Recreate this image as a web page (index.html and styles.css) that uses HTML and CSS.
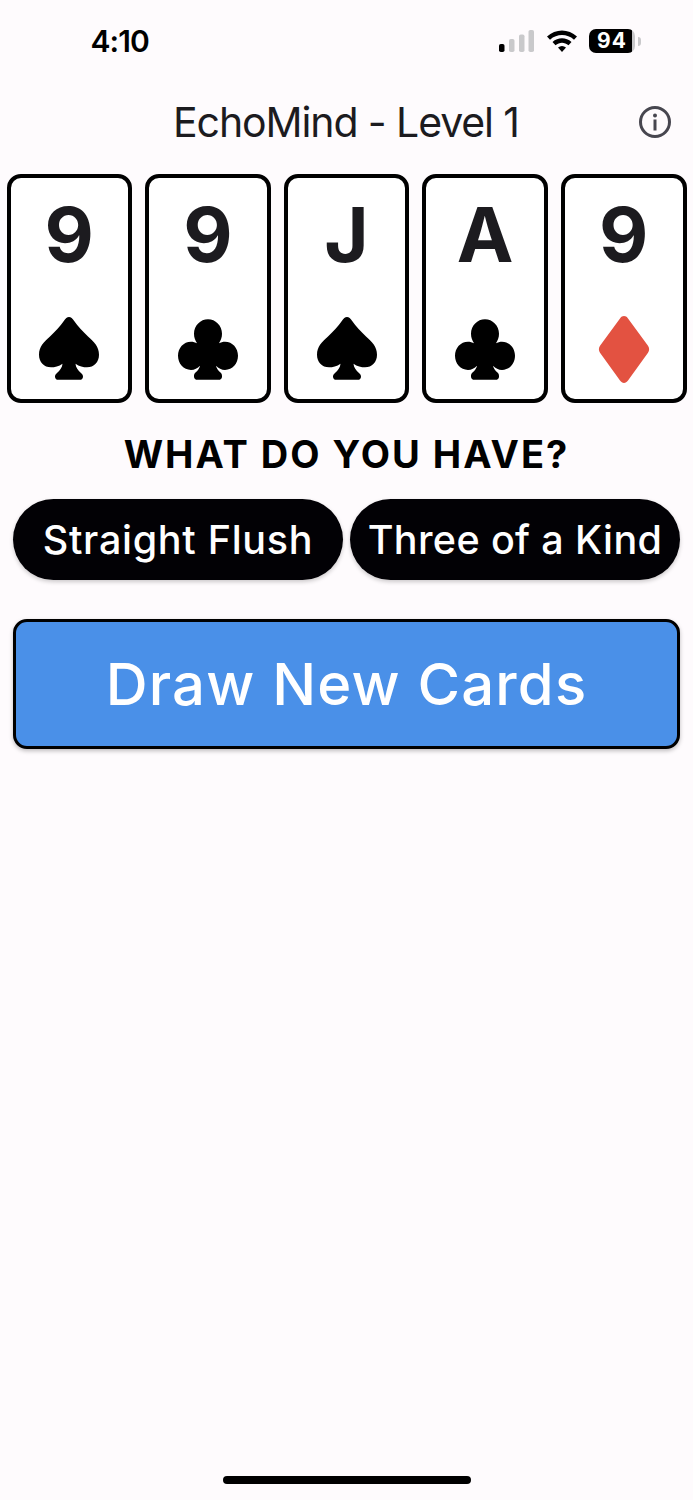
FILE: index.html
```html
<!DOCTYPE html>
<html lang="en">
<head>
<meta charset="utf-8">
<title>EchoMind</title>
<link rel="stylesheet" href="styles.css">
</head>
<body>
<div class="screen">
  <div class="status">
    <span class="time">4:10</span>
    <div class="status-icons">
      <svg class="signal" width="36" height="24" viewBox="0 0 36 24"><rect x="0" y="15" width="5.5" height="8" rx="1.8" fill="#000"/><rect x="10" y="10" width="5.5" height="13" rx="1.8" fill="#c9c9cb"/><rect x="20" y="5.500" width="5.500" height="17.500" rx="1.800" fill="#c9c9cb"/><rect x="29.500" y="1" width="5.500" height="22" rx="1.800" fill="#c9c9cb"/></svg>
      <svg class="wifi" width="32" height="24" viewBox="0 0 32 24"><path d="M1 8.500C9.500 .5 22.500 .5 31 8.500L28 11.700C21 5.500 11 5.500 4 11.700Z" fill="#000"/><path d="M6.500 14C12 9 20 9 25.500 14L22.500 17.200C18.500 13.800 13.500 13.800 9.500 17.200Z" fill="#000"/><path d="M12 19.500C14.500 17.500 17.500 17.500 20 19.500L16 24Z" fill="#000"/></svg>
      <div class="battery"><span class="battery-body">94</span><span class="battery-cap"></span></div>
    </div>
  </div>
  <header class="title-bar">
    <h1 class="title">EchoMind - Level 1</h1>
    <svg class="info" width="34" height="34" viewBox="0 0 34 34"><circle cx="17" cy="17" r="14.500" fill="none" stroke="#47464f" stroke-width="3"/><circle cx="17" cy="10.500" r="2" fill="#47464f"/><rect x="15.500" y="14.500" width="3" height="11" fill="#47464f"/></svg>
  </header>
  <div class="cards">
    <div class="card"><span class="rank">9</span><svg class="suit" width="64" height="67" viewBox="0 0 64 64" preserveAspectRatio="none"><use href="#spade"/></svg></div>
    <div class="card"><span class="rank">9</span><svg class="suit" width="64" height="67" viewBox="0 0 64 64" preserveAspectRatio="none"><use href="#club"/></svg></div>
    <div class="card"><span class="rank">J</span><svg class="suit" width="64" height="67" viewBox="0 0 64 64" preserveAspectRatio="none"><use href="#spade"/></svg></div>
    <div class="card"><span class="rank">A</span><svg class="suit" width="64" height="67" viewBox="0 0 64 64" preserveAspectRatio="none"><use href="#club"/></svg></div>
    <div class="card"><span class="rank">9</span><svg class="suit" width="64" height="67" viewBox="0 0 64 64" preserveAspectRatio="none"><use href="#diamond"/></svg></div>
  </div>
  <h2 class="question">WHAT DO YOU HAVE?</h2>
  <div class="choices">
    <button class="choice choice-a">Straight Flush</button>
    <button class="choice choice-b">Three of a Kind</button>
  </div>
  <button class="draw">Draw New Cards</button>
  <div class="spacer"></div>
  <div class="home-wrap"><div class="home"></div></div>
</div>
<svg class="defs" width="0" height="0">
  <defs>
    <path id="spade" fill="#000" d="M32 1C34 1 35.500 2.500 37 4.500C41 10 46 15 51 19.500C57 24.500 62 29 62 37C62 44 57 49 50 49C46.500 49 42 48 38.500 45.500C38.800 49 41 52 44 54.500C45.500 55.800 46 56.800 46 58C46 60 44.500 61 43 61H21C19.500 61 18 60 18 58C18 56.800 18.500 55.800 20 54.500C23 52 25.200 49 25.500 45.500C22 48 17.500 49 14 49C7 49 2 44 2 37C2 29 7 24.500 13 19.500C18 15 23 10 27 4.500C28.500 2.500 30 1 32 1Z"/>
    <path id="club" fill="#000" d="M32 3C39.500 3 46 9 46 17C46 20.500 44.800 23.500 43 26C44.500 25 47 24.500 49 24.500C56.500 24.500 62 30.500 62 38C62 45.500 56.500 51.500 49 51.500C45.500 51.500 42.500 50 40 47.500C40.500 50 42 52 44.500 54C46 55.500 46 56.500 46 58C46 60 44.500 61 42.500 61H21.500C19.500 61 18 60 18 58C18 56.500 18 55.500 19.500 54C22 52 23.500 50 24 47.500C21.500 50 18.500 51.500 15 51.500C7.500 51.500 2 45.500 2 38C2 30.500 7.500 24.500 15 24.500C17 24.500 19.500 25 21 26C19.200 23.500 18 20.500 18 17C18 9 24.500 3 32 3Z"/>
    <path id="diamond" fill="#e35241" d="M32 0C33.500 0 34.800 .8 36 2.300L56 28.500C57.500 30.500 57.500 33 56 35L36 61.700C34.800 63.200 33.500 64 32 64C30.500 64 29.200 63.200 28 61.700L8 35C6.500 33 6.500 30.500 8 28.500L28 2.300C29.200 .8 30.500 0 32 0Z"/>
  </defs>
</svg>
</body>
</html>
```
FILE: styles.css
```css
* { box-sizing: border-box; }
html, body { margin: 0; padding: 0; }
body { background: #fefbfd; font-family: Inter, "Liberation Sans", sans-serif; }
.screen { width: 693px; height: 1500px; display: flex; flex-direction: column; overflow: hidden; }
.status { height: 82px; flex: none; display: flex; justify-content: space-between; align-items: center; padding: 0 52px 0 90.500px; }
.time { font-size: 30px; font-weight: 600; color: #000; letter-spacing: -0.9px; }
.status-icons { display: flex; align-items: center; gap: 11px; margin-top: -2px; }
.signal { margin-top: 2px; }
.battery { display: flex; align-items: center; margin-top: 2px; }
.battery-body { width: 46px; height: 24px; border-radius: 7px; background: linear-gradient(90deg, #000 94%, #c9c9cb 94%); color: #fff; font-size: 21px; font-weight: 700; line-height: 24px; text-align: center; letter-spacing: 1px; }
.battery-cap { width: 3px; height: 9px; background: #c9c9cb; border-radius: 0 3px 3px 0; margin-left: 3px; }
.title-bar { height: 80px; flex: none; display: flex; align-items: center; justify-content: center; position: relative; padding-right: 1px; }
.title { margin: 0; font-size: 41px; font-weight: 400; color: #1c1b1f; letter-spacing: -1.1px; }
.info { position: absolute; right: 21.500px; top: 23px; }
.cards { margin-top: 12px; padding: 0 6.500px; display: flex; justify-content: space-between; }
.card { width: 125.500px; height: 229px; background: #fff; border: 4px solid #000; border-radius: 14px; display: flex; flex-direction: column; align-items: center; }
.rank { font-size: 76px; font-weight: 730; line-height: 82px; color: #1c1b1f; margin-top: 14.500px; }
.suit { margin-top: 41.500px; }
.question { margin: 29px 0 0; text-align: center; font-size: 38px; line-height: 44px; font-weight: 700; letter-spacing: 2px; color: #000; }
.choices { margin-top: 23px; padding: 0 13px; display: flex; justify-content: space-between; }
.choice { height: 81px; border: 0; border-radius: 41px; background: #020105; color: #fff; font-family: inherit; font-weight: 450; padding: 0; box-shadow: 0 2px 4px rgba(0,0,0,.2); width: 330px; }
.choice-a { font-size: 39.500px; letter-spacing: 0.700px; }
.choice-b { font-size: 39.500px; letter-spacing: 0.370px; }
.draw { margin: 39px 13px 0; height: 130px; border: 3px solid #000; border-radius: 14px; background: #4a90e8; color: #fff; font-family: inherit; font-size: 58px; font-weight: 450; letter-spacing: 1.200px; padding: 0; box-shadow: 0 2px 4px rgba(0,0,0,.25); }
.spacer { flex: 1; }
.home-wrap { height: 24px; flex: none; display: flex; justify-content: center; }
.home { width: 248px; height: 8px; border-radius: 4px; background: #000; }
.defs { display: block; }
```
